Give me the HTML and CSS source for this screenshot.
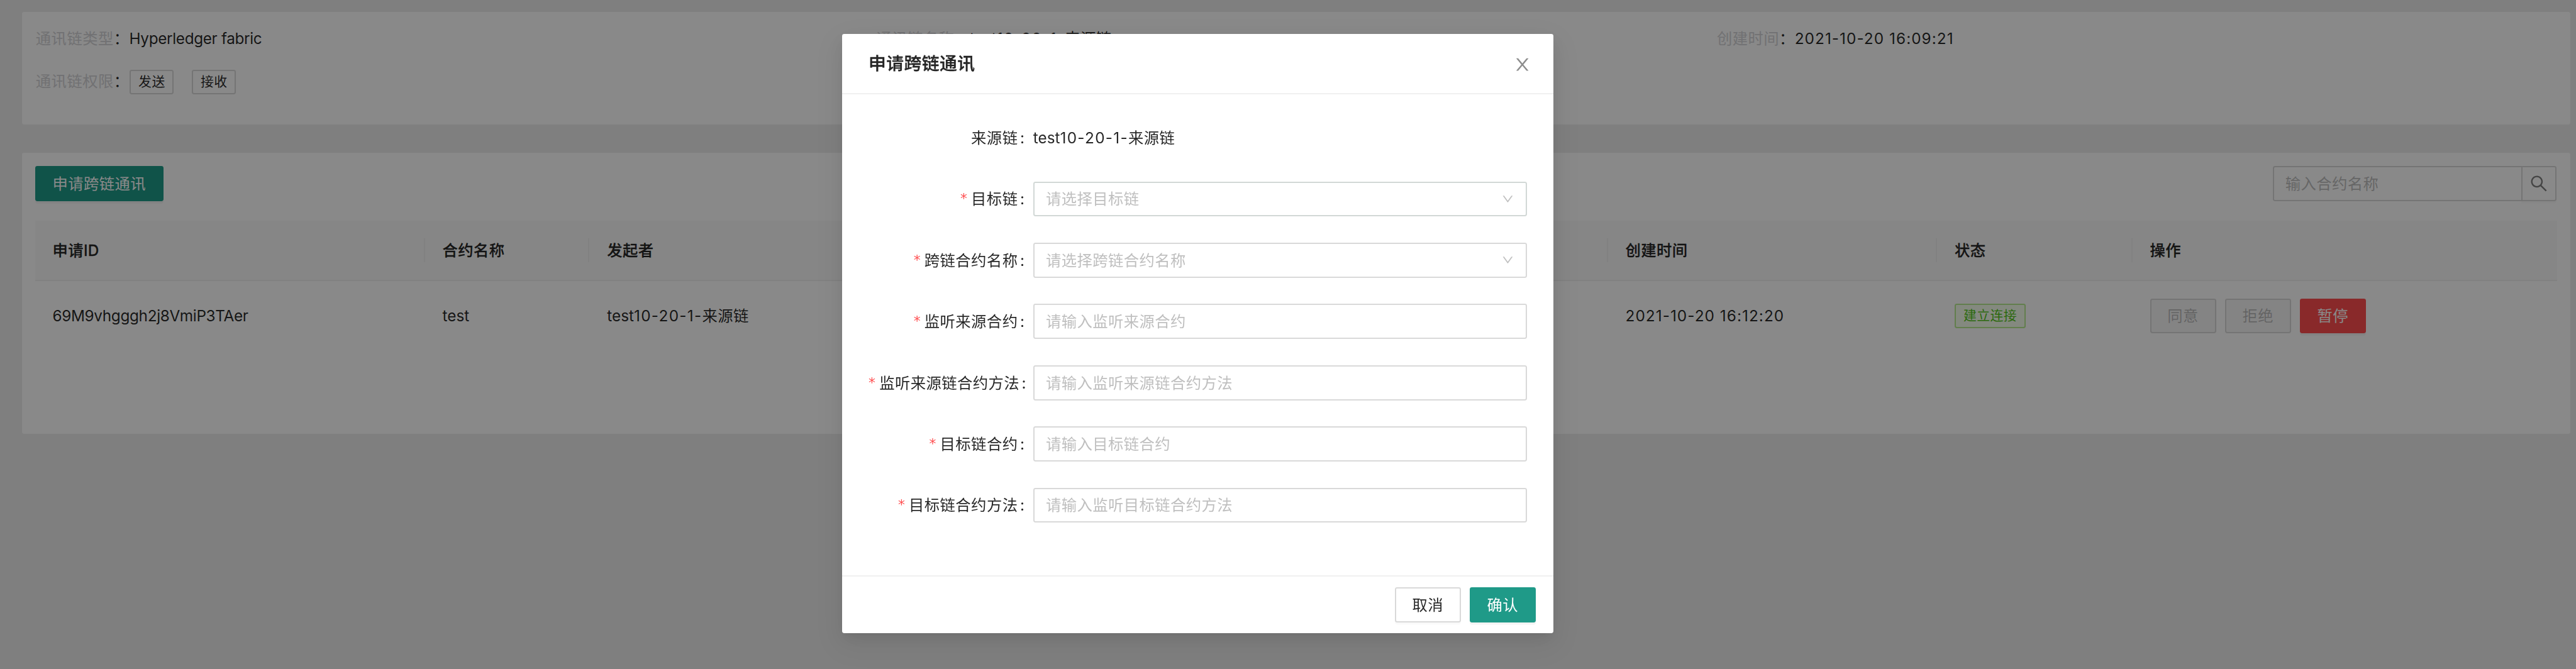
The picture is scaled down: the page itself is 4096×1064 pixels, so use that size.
FILE: index.html
```html
<!DOCTYPE html>
<html lang="zh-CN">
<head>
<meta charset="utf-8">
<title>申请跨链通讯</title>
<link rel="stylesheet" href="styles.css">
</head>
<body>
<main class="page">
  <section class="card info">
    <div class="info-cell"><span class="info-label">通讯链类型</span><span>：</span><span class="latin">Hyperledger fabric</span></div>
    <div class="info-cell"><span class="info-label">通讯链名称</span><span>：</span><span class="latin-short">test</span><span class="digits">10-20-1-</span>来源链</div>
    <div class="info-cell"><span class="info-label">创建时间</span><span>：</span><span class="date">2021-10-20 16:09:21</span></div>
    <div class="info-cell"><span class="info-label">通讯链权限</span><span>：</span><span class="tag">发送</span><span class="tag">接收</span></div>
  </section>

  <section class="card list">
    <div class="toolbar">
      <button class="btn btn-primary">申请跨链通讯</button>
      <div class="search">
        <div class="search-input">输入合约名称</div>
        <button class="search-btn" aria-label="搜索">
          <svg class="icon-search" viewBox="0 0 1024 1024" fill="currentColor"><path d="M909.6 854.5L649.9 594.8C690.2 542.7 712 479 712 412c0-80.200-31.300-155.400-87.900-212.100-56.600-56.700-132-87.900-212.100-87.900s-155.500 31.300-212.100 87.900C143.200 256.500 112 331.800 112 412c0 80.100 31.300 155.500 87.900 212.100C256.500 680.800 331.800 712 412 712c67 0 130.600-21.800 182.700-62l259.700 259.600a8.200 8.200 0 0 0 11.600 0l43.600-43.500a8.200 8.200 0 0 0 0-11.600zM570.400 570.400C528 612.700 471.800 636 412 636s-116-23.300-158.400-65.600C211.300 528 188 471.800 188 412s23.300-116.100 65.600-158.400C296 211.300 352.200 188 412 188s116.100 23.200 158.400 65.600S636 352.200 636 412s-23.300 116.100-65.600 158.400z"/></svg>
        </button>
      </div>
    </div>
    <div class="table">
      <div class="tr thead">
        <div class="th">申请<span class="latin-short">ID</span></div>
        <div class="th">合约名称</div>
        <div class="th">发起者</div>
        <div class="th">创建时间</div>
        <div class="th">状态</div>
        <div class="th">操作</div>
      </div>
      <div class="tr">
        <div class="td"><span class="latin">69M9vhgggh2j8VmiP3TAer</span></div>
        <div class="td"><span class="latin-short">test</span></div>
        <div class="td"><span class="latin-short">test</span><span class="digits">10-20-1-</span>来源链</div>
        <div class="td"><span class="date">2021-10-20 16:12:20</span></div>
        <div class="td"><span class="tag tag-success">建立连接</span></div>
        <div class="td actions">
          <button class="btn btn-disabled">同意</button>
          <button class="btn btn-disabled">拒绝</button>
          <button class="btn btn-danger">暂停</button>
        </div>
      </div>
    </div>
  </section>
</main>

<div class="mask">
  <div class="modal" role="dialog">
    <header class="modal-header">
      <h1 class="modal-title">申请跨链通讯</h1>
      <svg class="icon-close" viewBox="0 0 1024 1024" fill="currentColor"><path d="M563.8 512l262.500-312.900c4.400-5.200.7-13.100-6.100-13.100h-79.800c-4.700 0-9.200 2.100-12.300 5.700L511.600 449.800 295.100 191.700c-3-3.600-7.500-5.700-12.300-5.700H203c-6.800 0-10.500 7.900-6.100 13.100L459.400 512 196.900 824.900A7.950 7.950 0 0 0 203 838h79.800c4.700 0 9.200-2.100 12.300-5.700l216.500-258.100 216.500 258.100c3 3.600 7.500 5.700 12.300 5.700h79.800c6.800 0 10.500-7.900 6.100-13.100L563.800 512z"/></svg>
    </header>
    <div class="modal-body">
      <div class="field"><div class="label">来源链<span class="colon">:</span></div><div class="value"><span class="latin-short">test</span><span class="digits">10-20-1-</span>来源链</div></div>
      <div class="field"><div class="label"><span class="star">*</span>目标链<span class="colon">:</span></div><div class="input input-first">请选择目标链<svg class="icon-down" viewBox="0 0 1024 1024" fill="currentColor"><path d="M884 256h-75c-5.100 0-9.900 2.500-12.900 6.600L512 654.200 227.900 262.600c-3-4.100-7.800-6.600-12.900-6.600h-75c-6.500 0-10.300 7.400-6.500 12.700l352.600 486.100c12.800 17.600 39 17.600 51.700 0l352.600-486.100c3.900-5.300.1-12.700-6.400-12.700z"/></svg></div></div>
      <div class="field"><div class="label"><span class="star">*</span>跨链合约名称<span class="colon">:</span></div><div class="input">请选择跨链合约名称<svg class="icon-down" viewBox="0 0 1024 1024" fill="currentColor"><path d="M884 256h-75c-5.100 0-9.900 2.500-12.900 6.600L512 654.200 227.900 262.600c-3-4.100-7.800-6.600-12.900-6.600h-75c-6.500 0-10.300 7.400-6.500 12.700l352.600 486.100c12.800 17.600 39 17.600 51.700 0l352.600-486.100c3.900-5.300.1-12.700-6.400-12.700z"/></svg></div></div>
      <div class="field"><div class="label"><span class="star">*</span>监听来源合约<span class="colon">:</span></div><div class="input">请输入监听来源合约</div></div>
      <div class="field"><div class="label"><span class="star">*</span>监听来源链合约方法<span class="colon">:</span></div><div class="input">请输入监听来源链合约方法</div></div>
      <div class="field"><div class="label"><span class="star">*</span>目标链合约<span class="colon">:</span></div><div class="input">请输入目标链合约</div></div>
      <div class="field"><div class="label"><span class="star">*</span>目标链合约方法<span class="colon">:</span></div><div class="input">请输入监听目标链合约方法</div></div>
    </div>
    <footer class="modal-footer">
      <button class="btn">取消</button>
      <button class="btn btn-primary">确认</button>
    </footer>
  </div>
</div>
</body>
</html>
```
FILE: styles.css
```css
/* 1rem = 10 layout units */
html {
  font-size: 17.393px;
}

* {
  box-sizing: border-box;
}

body {
  margin: 0;
  height: 100vh;
  overflow: hidden;
  background: #ededed;
  color: rgba(0, 0, 0, 0.85);
  font-family: Inter, "Noto Sans CJK SC", sans-serif;
  font-size: 1.4rem;
  line-height: 2.2rem;
  letter-spacing: 0.024rem;
  white-space: nowrap;
}

.latin {
  letter-spacing: -0.02rem;
}

.latin-short {
  letter-spacing: 0;
}

.digits {
  letter-spacing: 0.075rem;
}

.date {
  letter-spacing: 0.06rem;
}

.page {
  display: flex;
  flex-direction: column;
  gap: 2.6rem;
  padding: 1.1rem 0.5rem 0 2rem;
}

.card {
  background: #fff;
  border-radius: 0.2rem;
}

.info {
  display: grid;
  grid-template-columns: repeat(3, 1fr);
  grid-auto-rows: 2.2rem;
  row-gap: 1.7rem;
  height: 10.3rem;
  padding: 1.3rem 1.2rem 0 1.27rem;
}

.info-cell {
  display: flex;
}

.info-label {
  color: #d3d3d6;
}

.tag {
  display: flex;
  align-items: center;
  height: 2.2rem;
  margin: 0.1rem 1.6rem 0 0.05rem;
  padding: 0 0.68rem;
  border: 2px solid #d9d9d9;
  border-radius: 0.2rem;
  font-size: 1.2rem;
}

.tag-success {
  margin: 0;
  border-color: #b7eb8f;
  background: #f6ffed;
  color: #52c41a;
}

.list {
  height: 25.7rem;
  padding: 1.2rem;
}

.toolbar {
  display: flex;
  justify-content: space-between;
  padding-right: 0.1rem;
}

.btn {
  display: flex;
  align-items: center;
  justify-content: center;
  height: 3.2rem;
  padding: 0 1.485rem;
  border: 2px solid #d9d9d9;
  border-radius: 0.2rem;
  background: #fff;
  box-shadow: 0 0.2rem 0 rgba(0, 0, 0, 0.02);
  color: rgba(0, 0, 0, 0.85);
  font: inherit;
  letter-spacing: inherit;
}

.btn-primary {
  border-color: #1f9a88;
  background: #1f9a88;
  box-shadow: 0 0.2rem 0 rgba(0, 0, 0, 0.045);
  color: #fff;
}

.btn-danger {
  border-color: #ff4d4f;
  background: #ff4d4f;
  box-shadow: 0 0.2rem 0 rgba(0, 0, 0, 0.045);
  color: #fff;
}

.btn-disabled {
  background: #f5f5f5;
  box-shadow: none;
  color: rgba(0, 0, 0, 0.25);
}

.search {
  display: flex;
  width: 25.9rem;
  height: 3.2rem;
}

.search-input {
  display: flex;
  flex: 1;
  align-items: center;
  padding-left: 1rem;
  border: 2px solid #d9d9d9;
  border-right: 0;
  border-radius: 0.2rem 0 0 0.2rem;
  color: #bfbfbf;
}

.search-btn {
  display: flex;
  align-items: center;
  justify-content: center;
  width: 3.2rem;
  padding: 0;
  border: 2px solid #d9d9d9;
  border-radius: 0 0.2rem 0.2rem 0;
  background: #fff;
  box-shadow: 0 0.2rem 0 rgba(0, 0, 0, 0.02);
  color: rgba(0, 0, 0, 0.5);
}

.icon-search {
  width: 1.83rem;
  height: 1.83rem;
}

.table {
  margin-top: 1.8rem;
}

.tr {
  display: grid;
  grid-template-columns: 35.65rem 15.05rem 93.1rem 30.1rem 17.85rem 1fr;
  align-items: center;
  height: 6.4rem;
}

.thead {
  height: 5.5rem;
  border-bottom: 2px solid #f0f0f0;
  background: #fafafa;
  font-weight: 500;
  -webkit-text-stroke: 0.012em;
}

.th {
  padding-left: 1.6rem;
  border-right: 2px solid #f0f0f0;
}

.th:last-child {
  border-right: 0;
}

.td {
  display: flex;
  padding-left: 1.6rem;
}

.actions {
  gap: 0.8rem;
}

.mask {
  position: fixed;
  inset: 0;
  padding-top: 3.1rem;
  background: rgba(0, 0, 0, 0.463);
}

.modal {
  width: 65rem;
  height: 54.8rem;
  margin: 0 0 0 77rem;
  border-radius: 0.2rem;
  background: #fff;
  box-shadow: 0 0.3rem 0.6rem -0.4rem rgba(0, 0, 0, 0.12), 0 0.6rem 1.6rem 0 rgba(0, 0, 0, 0.08), 0 0.9rem 2.8rem 0.8rem rgba(0, 0, 0, 0.05);
}

.modal-header {
  display: flex;
  align-items: center;
  justify-content: space-between;
  height: 5.5rem;
  padding: 0 1.9rem 0 2.4rem;
  border-bottom: 2px solid #f0f0f0;
}

.modal-title {
  margin: 0;
  font-size: 1.6rem;
  font-weight: 500;
  -webkit-text-stroke: 0.012em;
}

.icon-close {
  width: 1.8rem;
  height: 1.8rem;
  margin-top: 0.2rem;
  color: rgba(0, 0, 0, 0.45);
}

.modal-body {
  display: flex;
  flex-direction: column;
  gap: 2.4rem;
  height: 44rem;
  padding: 2.4rem;
}

.field {
  display: grid;
  grid-template-columns: 15.05rem 45.15rem;
  align-items: center;
  height: 3.2rem;
}

.label {
  display: flex;
  justify-content: safe flex-end;
}

.star {
  width: 0.59rem;
  margin-right: 0.4rem;
  color: #ff4d4f;
  font-family: "DejaVu Sans", sans-serif;
  font-size: 1.25rem;
  letter-spacing: 0;
}

.colon {
  width: 0.4rem;
  margin: 0 0.8rem 0 0.2rem;
}

.input {
  display: flex;
  align-items: center;
  justify-content: space-between;
  height: 3.2rem;
  padding: 0 1.05rem;
  border: 2px solid #d9d9d9;
  border-radius: 0.2rem;
  color: #bfbfbf;
}

.input-first {
  border-color: #d2d8d6;
}

.icon-down {
  width: 1.2rem;
  height: 1.2rem;
}

.modal-footer {
  display: flex;
  justify-content: flex-end;
  gap: 0.8rem;
  height: 5.3rem;
  padding: 1rem 1.6rem;
  border-top: 2px solid #f0f0f0;
}
```
